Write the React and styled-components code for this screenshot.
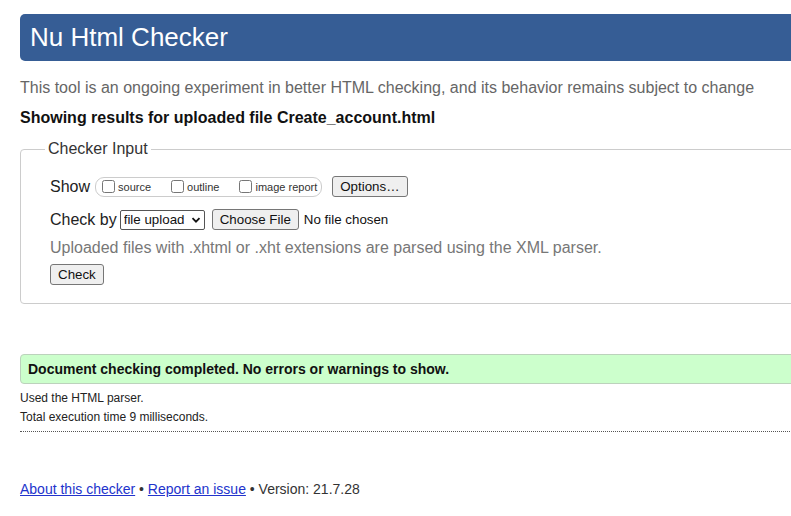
import styled, { createGlobalStyle } from 'styled-components';

const GlobalStyle = createGlobalStyle`
  html,
  body {
    margin: 0;
    overflow: hidden;
    background: #fff;
  }
  body {
    font-family: 'Liberation Sans', Arial, sans-serif;
    color: #222;
  }
`;

const App = () => {
  return (
    <>
      <GlobalStyle />
      <Page>
        <Title>Nu Html Checker</Title>
        <Intro>
          This tool is an ongoing experiment in better HTML checking, and its behavior remains
          subject to change
        </Intro>
        <ResultsFor>Showing results for uploaded file Create_account.html</ResultsFor>

        <InputBox>
          <Legend>Checker Input</Legend>
          <Row>
            <RowLabel>Show</RowLabel>
            <ShowGroup>
              <Option>
                <Checkbox type="checkbox" />
                source
              </Option>
              <Option>
                <Checkbox type="checkbox" />
                outline
              </Option>
              <Option>
                <Checkbox type="checkbox" />
                image report
              </Option>
            </ShowGroup>
            <Button $ml={10}>Options…</Button>
          </Row>
          <Row $mt={12}>
            <RowLabel>Check by</RowLabel>
            <SelectWrap>
              <Select defaultValue="file">
                <option value="file">file upload</option>
              </Select>
              <Chevron viewBox="0 0 10 10">
                <path d="M1.5 3.2 L5 6.7 L8.5 3.2" />
              </Chevron>
            </SelectWrap>
            <Button $ml={7}>Choose File</Button>
            <FileStatus>No file chosen</FileStatus>
          </Row>
          <Hint>Uploaded files with .xhtml or .xht extensions are parsed using the XML parser.</Hint>
          <CheckRow>
            <Button>Check</Button>
          </CheckRow>
        </InputBox>

        <Success>Document checking completed. No errors or warnings to show.</Success>
        <Details>
          <DetailLine>Used the HTML parser.</DetailLine>
          <DetailLine>Total execution time 9 milliseconds.</DetailLine>
        </Details>

        <Footer>
          <Link href="#">About this checker</Link> • <Link href="#">Report an issue</Link> •
          Version: 21.7.28
        </Footer>
      </Page>
    </>
  );
};

export default App;

const Page = styled.div`
  width: 840px;
  padding: 14px 0 0 20px;
`;

const Title = styled.h1`
  margin: 0;
  height: 47px;
  padding-left: 10px;
  background: #365d95;
  border-radius: 5px;
  color: #fff;
  font-size: 26px;
  font-weight: normal;
  line-height: 47px;
`;

const Intro = styled.p`
  margin: 18px 0 0;
  font-size: 16px;
  line-height: 18px;
  color: #666;
`;

const ResultsFor = styled.p`
  margin: 12px 0 0;
  font-size: 16px;
  line-height: 18px;
  font-weight: bold;
  color: #111;
`;

const InputBox = styled.fieldset`
  margin: 13px 0 0;
  padding: 18px 0 18px 29px;
  border: 1px solid #ccc;
  border-radius: 4px;
  min-width: 0;
`;

const Legend = styled.legend`
  margin-left: -5px;
  padding: 0 3px;
  font-size: 16px;
  line-height: 18px;
  color: #333;
`;

const Row = styled.div`
  display: flex;
  align-items: center;
  height: 21px;
  margin-top: ${p => p.$mt || 0}px;
`;

const RowLabel = styled.span`
  font-size: 16px;
  line-height: 18px;
  color: #222;
  margin-right: 4px;
`;

const ShowGroup = styled.span`
  display: inline-flex;
  align-items: center;
  gap: 20px;
  height: 18px;
  margin-left: 1px;
  padding: 0 4px 0 6px;
  border: 1px solid #ccc;
  border-radius: 9px;
`;

const Option = styled.label`
  display: inline-flex;
  align-items: center;
  gap: 3px;
  font-size: 11px;
  color: #333;
`;

const Checkbox = styled.input`
  width: 13px;
  height: 13px;
  margin: 0;
`;

const Button = styled.button`
  height: 21px;
  margin-left: ${p => p.$ml || 0}px;
  padding: 0 7px;
  background: #efefef;
  border: 1px solid #767676;
  border-radius: 3px;
  font-family: 'Liberation Sans', Arial, sans-serif;
  font-size: 13.33px;
  color: #111;
`;

const SelectWrap = styled.span`
  position: relative;
  display: inline-flex;
  margin-left: -1px;
`;

const Select = styled.select`
  appearance: none;
  width: 85px;
  height: 20px;
  padding: 0 0 0 3px;
  background: #fff;
  border: 1px solid #555;
  border-radius: 2px;
  font-family: 'Liberation Sans', Arial, sans-serif;
  font-size: 13.33px;
  color: #111;
`;

const Chevron = styled.svg`
  position: absolute;
  right: 4px;
  top: 5px;
  width: 10px;
  height: 10px;
  fill: none;
  stroke: #111;
  stroke-width: 1.8;
  pointer-events: none;
`;

const FileStatus = styled.span`
  margin-left: 5px;
  font-size: 13.33px;
  color: #111;
`;

const Hint = styled.p`
  margin: 9px 0 0;
  font-size: 16px;
  line-height: 18px;
  color: #777;
`;

const CheckRow = styled.div`
  display: flex;
  margin-top: 7px;
`;

const Success = styled.div`
  margin-top: 50px;
  height: 28px;
  padding-left: 7px;
  background: #ccffcc;
  border: 1px solid #bcd2bc;
  border-radius: 4px;
  font-size: 14px;
  font-weight: bold;
  line-height: 28px;
  color: #111;
`;

const Details = styled.div`
  margin-top: 5px;
  padding-bottom: 4px;
  border-bottom: 1px dotted #555;
`;

const DetailLine = styled.p`
  margin: 0;
  font-size: 12px;
  line-height: 19px;
  color: #222;
`;

const Footer = styled.p`
  margin: 49px 0 0;
  font-size: 14px;
  line-height: 16px;
  color: #333;
`;

const Link = styled.a`
  color: #2233cc;
`;
